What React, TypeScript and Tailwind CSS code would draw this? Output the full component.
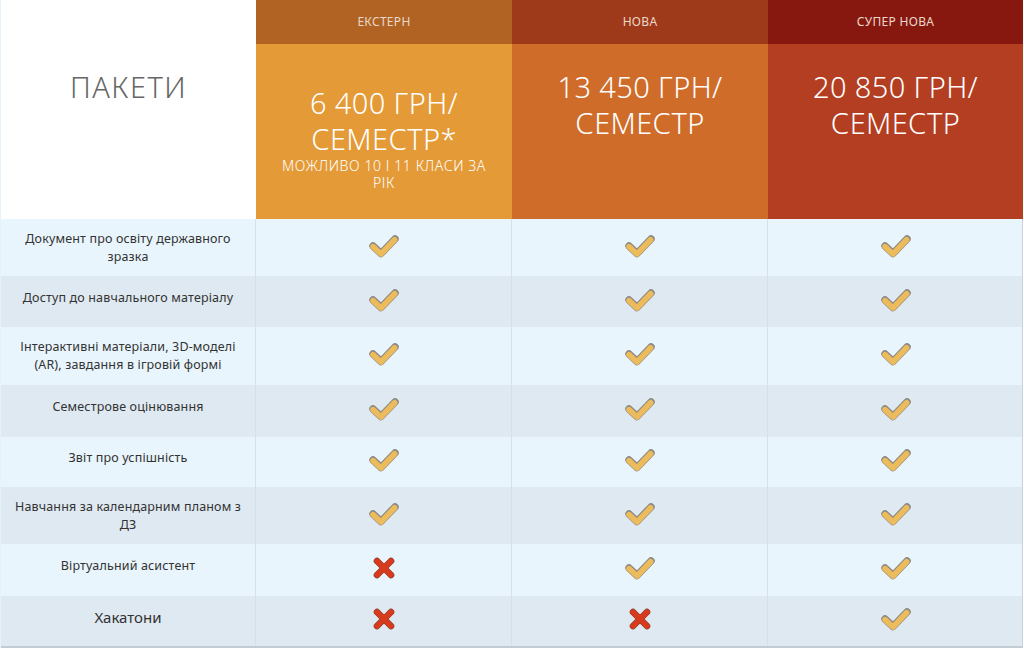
import React from "react";

function Check() {
  return (
    <svg width="30" height="24" viewBox="0 0 30 24" className="block">
      <polyline points="4,12 12,19.5 26,5" fill="none" stroke="#8d8a84" strokeWidth="7.5" strokeLinecap="round" strokeLinejoin="round" />
      <polyline points="4,12.6 12,20 25.6,5.8" fill="none" stroke="#ECBB5B" strokeWidth="5.6" strokeLinecap="round" strokeLinejoin="round" />
    </svg>
  );
}

function Cross() {
  return (
    <svg width="22" height="22" viewBox="0 0 22 22" className="block">
      <g stroke="#8b3a2a" strokeWidth="6.6" strokeLinecap="round">
        <line x1="4" y1="4" x2="18" y2="18" />
        <line x1="18" y1="4" x2="4" y2="18" />
      </g>
      <g stroke="#D63B1E" strokeWidth="5.4" strokeLinecap="round">
        <line x1="4" y1="4" x2="18" y2="18" />
        <line x1="18" y1="4" x2="4" y2="18" />
      </g>
    </svg>
  );
}

type Row = { label: string[]; h: string; vals: boolean[]; big?: boolean; shift?: boolean };

const rows: Row[] = [
  { label: ["Документ про освіту державного", "зразка"], h: "h-[57px]", vals: [true, true, true] },
  { label: ["Доступ до навчального матеріалу"], h: "h-[51px]", vals: [true, true, true], shift: true },
  { label: ["Інтерактивні матеріали, 3D-моделі", "(AR), завдання в ігровій формі"], h: "h-[58px]", vals: [true, true, true] },
  { label: ["Семестрове оцінювання"], h: "h-[52px]", vals: [true, true, true], shift: true },
  { label: ["Звіт про успішність"], h: "h-[50px]", vals: [true, true, true], shift: true },
  { label: ["Навчання за календарним планом з", "ДЗ"], h: "h-[57px]", vals: [true, true, true] },
  { label: ["Віртуальний асистент"], h: "h-[52px]", vals: [false, true, true], shift: true },
  { label: ["Хакатони"], h: "h-[50px]", vals: [false, false, true], big: true, shift: true },
];

const cols = [
  { name: "ЕКСТЕРН", band: "bg-[#B06323]", block: "bg-[#E49A37]", price: ["6 400 ГРН/", "СЕМЕСТР*"], note: ["МОЖЛИВО 10 І 11 КЛАСИ ЗА", "РІК"] },
  { name: "НОВА", band: "bg-[#9E3A19]", block: "bg-[#D06C2A]", price: ["13 450 ГРН/", "СЕМЕСТР"] },
  { name: "СУПЕР НОВА", band: "bg-[#87180F]", block: "bg-[#B33E22]", price: ["20 850 ГРН/", "СЕМЕСТР"] },
];

export default function App() {
  return (
    <div className="w-[1024px] h-[648px] bg-white overflow-hidden font-['Noto_Sans',sans-serif]">
      <div className="w-[1023px] border-l border-l-[#e6f2fb] border-r border-r-[#c9d2da]">
        {/* header */}
        <div className="grid grid-cols-[255px_256px_256px_255px] h-[219px]">
          <div className="bg-white flex justify-center pt-[69px]">
            <div className="text-[29px] leading-[36px] font-light text-[#666666] tracking-[1.5px]">ПАКЕТИ</div>
          </div>
          {cols.map((c, i) => (
            <div key={i} className="flex flex-col">
              <div className={`${c.band} h-[44px] flex items-center justify-center text-[12px] text-[#ead8cc] tracking-[0.3px]`}>
                {c.name}
              </div>
              <div className={`${c.block} flex-1 flex flex-col items-center text-white ${c.note ? "pt-[41px]" : "pt-[25px]"}`}>
                {c.price.map((p, j) => (
                  <div key={j} className="text-[29px] leading-[36px] font-light tracking-[0.4px]">{p}</div>
                ))}
                {c.note && (
                  <div className="flex flex-col items-center text-[14px] leading-[17px] font-light tracking-[0.6px]">
                    {c.note.map((n, j) => (
                      <div key={j}>{n}</div>
                    ))}
                  </div>
                )}
              </div>
            </div>
          ))}
        </div>
        {/* rows */}
        {rows.map((r, i) => (
          <div
            key={i}
            className={`grid grid-cols-[255px_256px_256px_255px] ${r.h} ${i % 2 === 0 ? "bg-[#E9F5FD]" : "bg-[#DFE9F2]"}`}
          >
            <div className={`flex flex-col items-center justify-center text-[#333333] border-r border-r-[#d6e0e8] ${r.shift ? "pb-[8px]" : ""} ${r.big ? "text-[15px]" : "text-[12.5px] leading-[18px] tracking-[0.15px]"}`}>
              {r.label.map((l, j) => (
                <div key={j} className="whitespace-nowrap">{l}</div>
              ))}
            </div>
            {r.vals.map((v, j) => (
              <div key={j} className={`flex items-center justify-center pb-[4px] ${j < 2 ? "border-r border-r-[#d6e0e8]" : ""}`}>
                {v ? <Check /> : <Cross />}
              </div>
            ))}
          </div>
        ))}
        <div className="h-[2px] bg-[#c4ccd3]" />
      </div>
    </div>
  );
}
